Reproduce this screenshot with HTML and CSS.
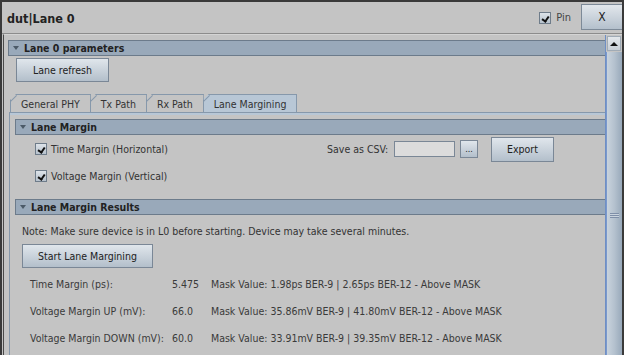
FILE: index.html
```html
<!DOCTYPE html>
<html lang="en">
<head>
    <meta charset="UTF-8">
    <meta name="viewport" content="width=device-width, initial-scale=1.0">
    <title>dut|Lane 0</title>
    <link rel="stylesheet" href="styles.css">
</head>
<body>
    <div class="window">
        <div class="titlebar">
            <div class="title">dut|Lane 0</div>
            <label class="pin"><span class="check on"></span>Pin</label>
            <button class="close">X</button>
        </div>
        <div class="main">
            <div class="content">
                <div class="section-head"><span class="arrow"></span>Lane 0 parameters</div>
                <div class="params">
                    <button class="btn refresh">Lane refresh</button>
                </div>
                <div class="tabs">
                    <div class="tab">General PHY</div>
                    <div class="tab">Tx Path</div>
                    <div class="tab">Rx Path</div>
                    <div class="tab active">Lane Margining</div>
                </div>
                <div class="tab-pane">
                    <div class="section-head"><span class="arrow"></span>Lane Margin</div>
                    <div class="margin-opts">
                        <div class="opt-row">
                            <label class="opt"><span class="check on"></span>Time Margin (Horizontal)</label>
                            <span class="csv-label">Save as CSV:</span>
                            <span class="field"></span>
                            <button class="btn dots">...</button>
                            <button class="btn export">Export</button>
                        </div>
                        <div class="opt-row second">
                            <label class="opt"><span class="check on"></span>Voltage Margin (Vertical)</label>
                        </div>
                    </div>
                    <div class="section-head"><span class="arrow"></span>Lane Margin Results</div>
                    <div class="results">
                        <p class="note">Note: Make sure device is in L0 before starting. Device may take several minutes.</p>
                        <button class="btn start">Start Lane Margining</button>
                        <div class="result-grid">
                            <span>Time Margin (ps):</span>
                            <span>5.475</span>
                            <span>Mask Value: 1.98ps BER-9 | 2.65ps BER-12 - Above MASK</span>
                            <span>Voltage Margin UP (mV):</span>
                            <span>66.0</span>
                            <span>Mask Value: 35.86mV BER-9 | 41.80mV BER-12 - Above MASK</span>
                            <span>Voltage Margin DOWN (mV):</span>
                            <span>60.0</span>
                            <span>Mask Value: 33.91mV BER-9 | 39.35mV BER-12 - Above MASK</span>
                        </div>
                    </div>
                </div>
            </div>
            <div class="scrollbar">
                <div class="sb-up"><span></span></div>
                <div class="sb-thumb"><span class="grip"></span></div>
            </div>
        </div>
    </div>
</body>
</html>
```

FILE: styles.css
```css
* {
    box-sizing: border-box;
}
body {
    margin: 0;
    font-family: "DejaVu Sans Condensed", "DejaVu Sans", sans-serif;
    font-stretch: condensed;
    font-size: 10.5px;
    color: #333;
    background-color: #c4c4c4;
}
.window {
    width: 624px;
    height: 355px;
    border: 2px solid #3a3a3a;
    border-bottom: none;
    background-color: #c4c4c4;
    overflow: hidden;
    display: flex;
    flex-direction: column;
}
.titlebar {
    height: 32px;
    display: flex;
    align-items: center;
    padding-left: 5px;
    border-bottom: 1px solid #8c8c8c;
    flex-shrink: 0;
}
.title {
    font-weight: bold;
    font-size: 12.5px;
    color: #222;
    flex: 1;
    margin-top: 1px;
}
.pin {
    display: flex;
    align-items: center;
    gap: 5px;
    color: #444;
    font-size: 11px;
    margin-right: 10px;
}
.close {
    width: 41px;
    height: 26px;
    margin-top: -2px;
    border: 1px solid #7d8a98;
    border-right: none;
    background: linear-gradient(#e2e7ec, #b4c0cc);
    font: inherit;
    font-size: 12px;
    color: #222;
    padding: 0;
}
.check {
    display: inline-block;
    width: 12px;
    height: 12px;
    border: 1px solid #6e7c8a;
    background: linear-gradient(#dde3e9, #b7c2cd);
    position: relative;
    flex-shrink: 0;
}
.check.on::after {
    content: "";
    position: absolute;
    left: 3px;
    top: 2px;
    width: 3px;
    height: 5px;
    border-right: 2px solid #111;
    border-bottom: 2px solid #111;
    transform: rotate(35deg);
}
.main {
    flex: 1;
    display: flex;
    margin-left: 1px;
    border-left: 1px solid #4a4a4a;
    border-top: 1px solid #d4d4d4;
    min-height: 0;
}
.content {
    flex: 1;
    min-width: 0;
    padding: 5px 0 0 4px;
    overflow: hidden;
}
.section-head {
    height: 16px;
    width: 700px;
    border: 1px solid #6c7b8b;
    background-color: #99a9ba;
    font-weight: bold;
    color: #222;
    display: flex;
    align-items: center;
    padding-left: 4px;
}
.arrow {
    width: 0;
    height: 0;
    border-left: 3px solid transparent;
    border-right: 3px solid transparent;
    border-top: 4px solid #4c5a68;
    margin-right: 5px;
}
.params {
    padding: 2px 0 0 8px;
    height: 38px;
}
.btn {
    font: inherit;
    color: #222;
    border: 1px solid #7a8796;
    background: linear-gradient(#e0e6ec, #b3bfcb);
    padding: 0;
}
.refresh {
    width: 93px;
    height: 24px;
}
.tabs {
    display: flex;
    padding-left: 3px;
    height: 18px;
}
.tab {
    position: relative;
    height: 18px;
    padding: 0 10px 0 11px;
    border-top: 1px solid #8698ab;
    border-right: 1px solid #8698ab;
    display: flex;
    align-items: center;
    clip-path: polygon(6px 0, 100% 0, 100% 100%, 0 100%, 0 6px);
    margin-left: -1px;
    color: #333;
}
.tab::before {
    content: "";
    position: absolute;
    left: 0;
    top: 0;
    width: 1px;
    height: 100%;
    background-color: #8698ab;
}
.tab::after {
    content: "";
    position: absolute;
    left: 3px;
    top: -1px;
    width: 1px;
    height: 9px;
    background-color: #8698ab;
    transform: rotate(45deg);
}
.tab.active {
    background-color: #b8c7d6;
}
.tab-pane {
    margin-left: 1px;
    width: 720px;
    border-left: 1px solid #8698ab;
    border-top: 1px solid #8698ab;
    box-shadow: inset 0 2px 0 #b8c7d6;
    padding: 6px 0 0 5px;
    height: 260px;
}
.margin-opts {
    padding: 1px 0 0 20px;
    height: 64px;
}
.opt-row {
    display: flex;
    align-items: center;
    height: 26px;
}
.opt-row.second {
    height: 28px;
}
.opt {
    display: flex;
    align-items: center;
    gap: 4px;
    width: 292px;
}
.csv-label {
    width: 67px;
}
.field {
    width: 61px;
    height: 16px;
    border: 1px solid #7a8796;
    background-color: #dcdcdc;
}
.dots {
    width: 18px;
    height: 18px;
    margin-left: 5px;
    font-size: 9px;
}
.export {
    width: 63px;
    height: 25px;
    margin-left: 13px;
}
.results {
    padding: 10px 0 0 7px;
}
.note {
    margin: 0;
    line-height: 13px;
}
.start {
    margin-top: 6px;
    width: 131px;
    height: 24px;
}
.result-grid {
    display: grid;
    grid-template-columns: 142px 39px auto;
    grid-auto-rows: 27px;
    align-items: center;
    padding: 1px 0 0 8px;
    margin-top: 1px;
    color: #3a3a3a;
}
.scrollbar {
    width: 17px;
    flex-shrink: 0;
    border-left: 1px solid #6f8fc4;
    display: flex;
    flex-direction: column;
    padding-top: 1px;
}
.sb-up {
    height: 15px;
    margin: 0 1px;
    background: linear-gradient(#e4e8ec, #c8cfd6);
    border: 1px solid #a0abb6;
    display: flex;
    align-items: center;
    justify-content: center;
}
.sb-up span {
    width: 0;
    height: 0;
    border-left: 4px solid transparent;
    border-right: 4px solid transparent;
    border-bottom: 4px solid #111;
}
.sb-thumb {
    flex: 1;
    margin-top: 1px;
    border-left: 1px solid #7a98cc;
    background: linear-gradient(90deg, #c9d3dd, #b4c1ce 50%, #98a9ba);
    display: flex;
    align-items: center;
    justify-content: center;
}
.grip {
    width: 9px;
    height: 5px;
    border-top: 1px solid #7f8fa8;
    border-bottom: 1px solid #7f8fa8;
    background: linear-gradient(#c9d3dd 40%, #7f8fa8 40%, #7f8fa8 60%, #c9d3dd 60%);
    margin-top: 24px;
}
```
